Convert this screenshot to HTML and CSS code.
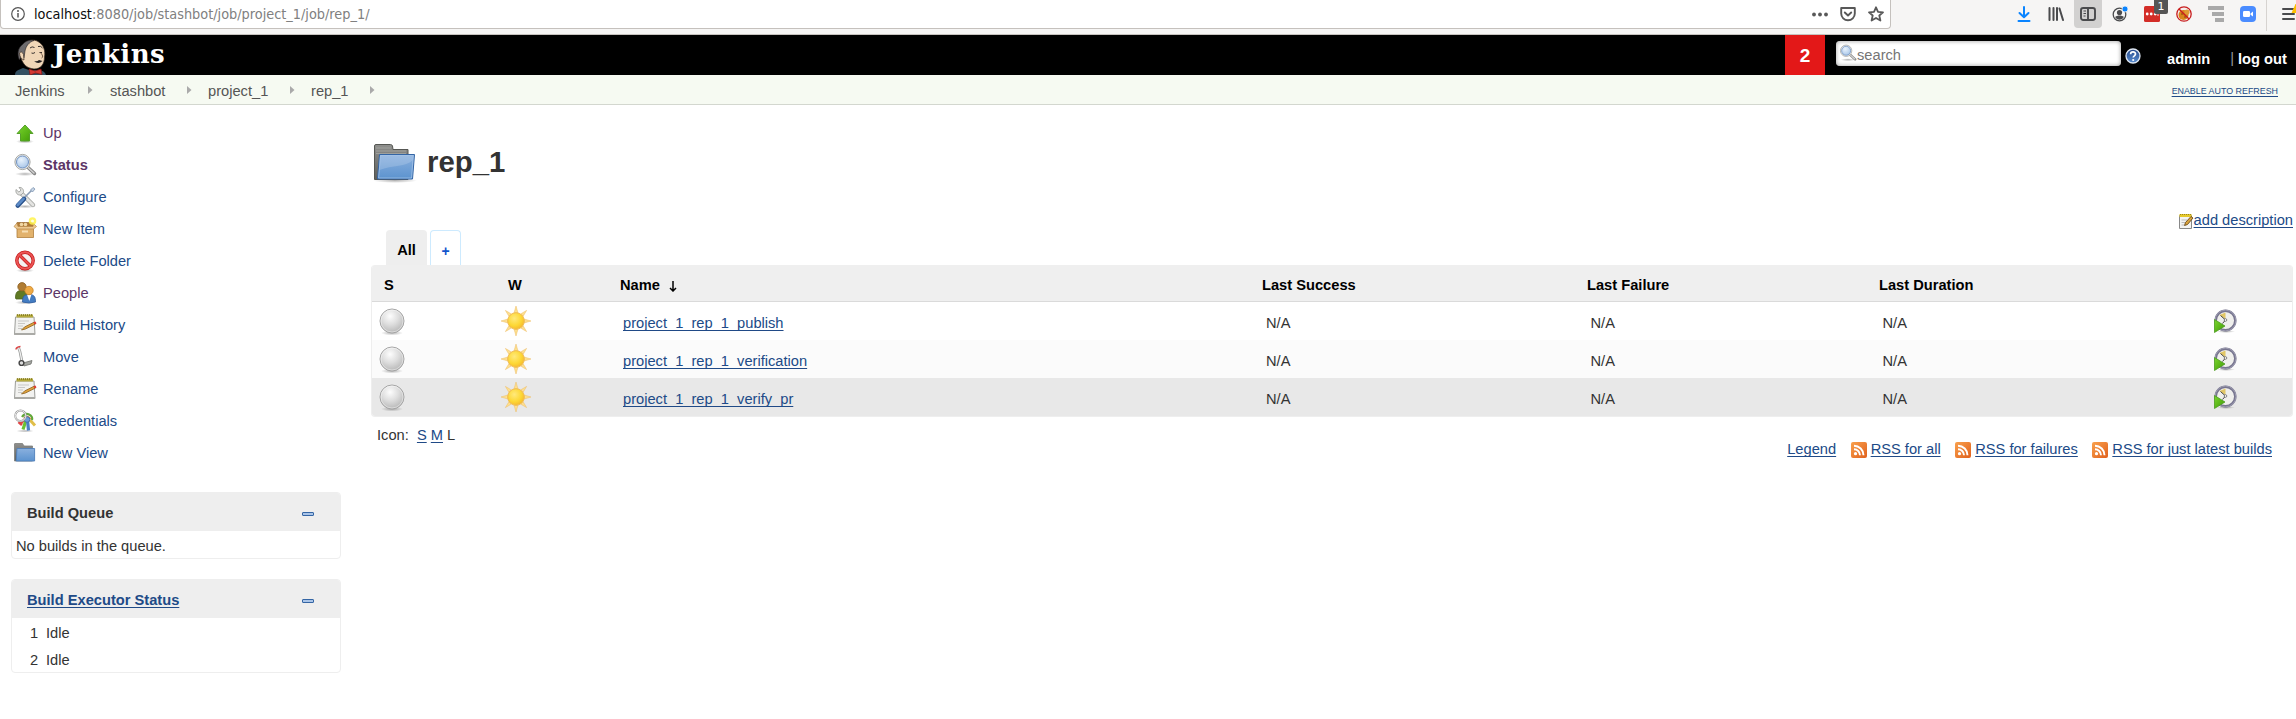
FILE: index.html
```html
<!DOCTYPE html>
<html lang="en">
<head>
<meta charset="utf-8">
<title>rep_1 [Jenkins]</title>
<link rel="stylesheet" href="styles.css">
</head>
<body>
<svg class="defs" width="0" height="0" aria-hidden="true">
  <defs>
    <linearGradient id="gGreen" x1="0" y1="0" x2="1" y2="1"><stop offset="0" stop-color="#7bd62e"/><stop offset="1" stop-color="#3f9a05"/></linearGradient>
    <linearGradient id="gFolder" x1="0" y1="0" x2="0" y2="1"><stop offset="0" stop-color="#8ab0de"/><stop offset="1" stop-color="#5c93cf"/></linearGradient>
    <linearGradient id="gBack" x1="0" y1="0" x2="0" y2="1"><stop offset="0" stop-color="#8f8f8d"/><stop offset="1" stop-color="#5c5e5b"/></linearGradient>
    <radialGradient id="gBall" cx=".42" cy=".3" r=".7"><stop offset="0" stop-color="#fdfdfd"/><stop offset=".5" stop-color="#dedede"/><stop offset="1" stop-color="#b8b8b8"/></radialGradient>
    <radialGradient id="gSun" cx=".4" cy=".35" r=".7"><stop offset="0" stop-color="#ffe97c"/><stop offset=".6" stop-color="#fdd835"/><stop offset="1" stop-color="#f5b62c"/></radialGradient>
    <radialGradient id="gLens" cx=".4" cy=".3" r=".8"><stop offset="0" stop-color="#e9f3fd"/><stop offset="1" stop-color="#a3c2e6"/></radialGradient>
    <radialGradient id="gShadow"><stop offset="0" stop-color="#000" stop-opacity=".3"/><stop offset="1" stop-color="#000" stop-opacity="0"/></radialGradient>
    <linearGradient id="gRss" x1="0" y1="0" x2="1" y2="1"><stop offset="0" stop-color="#f9a14d"/><stop offset="1" stop-color="#e0601c"/></linearGradient>
    <linearGradient id="gHelp" x1="0" y1="0" x2="0" y2="1"><stop offset="0" stop-color="#23478c"/><stop offset="1" stop-color="#5c8fd0"/></linearGradient>

    <symbol id="i-up" viewBox="0 0 24 24"><ellipse cx="12" cy="20.500" rx="9" ry="2" fill="url(#gShadow)"/><path d="M12 4 20 12.500H16.500V20H7.500V12.500H4Z" fill="url(#gGreen)" stroke="#55a02a" stroke-linejoin="round"/></symbol>
    <symbol id="i-status" viewBox="0 0 24 24"><ellipse cx="12" cy="21" rx="10" ry="2" fill="url(#gShadow)"/><path d="M15 14.500 21.500 20.500" stroke="#858585" stroke-width="3.400" stroke-linecap="round"/><path d="M15 14.500 21 20" stroke="#d2d2d2" stroke-width="1.500" stroke-linecap="round"/><circle cx="9.500" cy="9" r="7.600" fill="#eee" stroke="#a4a6a2"/><circle cx="9.500" cy="9" r="6" fill="url(#gLens)" stroke="#6f92c2"/></symbol>
    <symbol id="i-configure" viewBox="0 0 24 24"><ellipse cx="12" cy="21.500" rx="10" ry="1.800" fill="url(#gShadow)"/><path d="M8 8 20 20" stroke="#9c9e9a" stroke-width="4.400" stroke-linecap="round"/><path d="M8 8 20 20" stroke="#e4e4e2" stroke-width="2.900" stroke-linecap="round"/><path d="M3 4.500C2.300 8 4.500 10.500 8 10L10.500 7.500C11 4.500 9 2 6 2.500L8 5 6 7.200Z" fill="#e4e4e2" stroke="#979995" stroke-width=".8"/><path d="M12 12 19.500 4.500" stroke="#8a9cb5" stroke-width="1.600"/><path d="M17.500 5 20 2.500 22 4 19.500 7Z" fill="#c9d6e6" stroke="#7089a9" stroke-width=".7"/><path d="M4.800 20.500 11 14" stroke="#27508a" stroke-width="4.600" stroke-linecap="round"/><path d="M4.600 20 10.600 13.800" stroke="#5b8ac6" stroke-width="2.600" stroke-linecap="round"/></symbol>
    <symbol id="i-new" viewBox="0 0 24 24"><path d="M4 5.500H20L20.500 10H3.500Z" fill="#b07a35" stroke="#a0713a" stroke-width=".8"/><circle cx="8.500" cy="7.500" r="1.800" fill="#f0d7a5"/><circle cx="12.500" cy="7.500" r="1.800" fill="#f0d7a5"/><path d="M4 10.500H20.500V20.500H4Z" fill="#e2b26c" stroke="#b07f3d" stroke-width=".8"/><path d="M1 9.500 4 6 5 9.500H20L20.500 6.500 23.500 9.500 20.500 12H4Z" fill="#edc88f" stroke="#b98a4b" stroke-width=".7"/><path d="M9 13.500H15V15.500H9Z" fill="#f6dfb4"/><circle cx="19.500" cy="4" r="3.800" fill="#fff34a" opacity=".85"/><circle cx="19.500" cy="4" r="1.500" fill="#fffde0"/></symbol>
    <symbol id="i-delete" viewBox="0 0 24 24"><ellipse cx="12" cy="21.500" rx="9" ry="2" fill="url(#gShadow)"/><circle cx="12" cy="11.500" r="8.200" fill="#f4f1f1" stroke="#c41c1c" stroke-width="3.400"/><path d="M6.500 6 17.500 17" stroke="#c41c1c" stroke-width="3.200"/><circle cx="12" cy="11.500" r="8.200" fill="none" stroke="#ec5555" stroke-width="1.900"/><path d="M6.500 6 17.500 17" stroke="#e94949" stroke-width="1.900"/></symbol>
    <symbol id="i-people" viewBox="0 0 24 24"><ellipse cx="12" cy="21.500" rx="10" ry="2" fill="url(#gShadow)"/><path d="M2.500 17C2.500 11 4.500 9.500 9 9.500S15 12 15 18H3Z" fill="#607a24" stroke="#4d6420" stroke-width=".8"/><circle cx="9" cy="5.800" r="4.200" fill="#b07c33" stroke="#8c5f22" stroke-width=".8"/><path d="M9.500 21C9.500 15.500 11 13.500 16 13.500S22.500 15.500 22.500 21Q16 23 9.500 21Z" fill="#437cc2" stroke="#2f5c9c" stroke-width=".8"/><path d="M14 13.500H18.500L16.300 20Z" fill="#fff"/><circle cx="16" cy="9.500" r="4.200" fill="#eeaa45" stroke="#c98222" stroke-width=".8"/></symbol>
    <symbol id="i-note" viewBox="0 0 24 24"><path d="M2.500 4H21L22 21.500H1.500Z" fill="#f2f2f0" stroke="#9c9d99"/><path d="M1.500 20H22V22H1.500Z" fill="#aaaaa6"/><path d="M3.500 1.500H20V4.500H3.500Z" fill="#b5aa3c"/><path d="M4 2H20" stroke="#7f761c" stroke-width="1.300" stroke-dasharray="1 1"/><path d="M5 8H16M5 10.500H12M5 13H10M5 15.500H9" stroke="#c8c8c6"/><path d="M8.500 17 11.500 14 21.500 9 22.500 11 12.500 16Z" fill="#dfa23a" stroke="#8c6224" stroke-width=".8"/><path d="M20.500 9.300 22.500 8.500 23.500 10.500 21.500 11.500Z" fill="#df3c35"/></symbol>
    <symbol id="i-move" viewBox="0 0 24 24"><path d="M5.500 2.500C8.500 9 7.500 13 9.500 18" fill="none" stroke="#979997" stroke-width="2.800"/><path d="M5.500 2.500C8.500 9 7.500 13 9.500 18" fill="none" stroke="#f0f0f0" stroke-width="1.300"/><path d="M3 4.500Q3 2 7.500 1.500" fill="none" stroke="#d44" stroke-width="1.500"/><path d="M10 18 19 15.500 18 19 11 21Z" fill="#a6a8a3" stroke="#6d6f6b" stroke-width=".8"/><circle cx="8.500" cy="18" r="2.400" fill="#ddd" stroke="#444" stroke-width="1.400"/></symbol>
    <symbol id="i-keys" viewBox="0 0 24 24"><ellipse cx="12" cy="22" rx="9" ry="1.500" fill="url(#gShadow)"/><path d="M12 10 7 15.500M5.500 13 9 16" stroke="#e04444" stroke-width="2.600"/><path d="M13 11 10 20.500" stroke="#6cc133" stroke-width="3.200"/><path d="M17 11 22 16.500" stroke="#e0be48" stroke-width="3"/><path d="M14.500 11 15.500 21.500" stroke="#4a7fc4" stroke-width="3.200"/><path d="M9 8Q12 3.500 16 5.500T19 11" fill="none" stroke="#62a83a" stroke-width="2.200"/><path d="M11 9Q14 5.500 17.500 10" fill="none" stroke="#e07a30" stroke-width="1.600"/><circle cx="14" cy="10.500" r="2.800" fill="#6b9bd8" stroke="#4672ac"/><circle cx="7.500" cy="6.800" r="5.300" fill="none" stroke="#9a9a9a" stroke-width="2"/><circle cx="7.500" cy="6.800" r="5.300" fill="none" stroke="#f2f2f2" stroke-width=".9"/></symbol>
    <symbol id="i-folder" viewBox="0 0 24 24"><path d="M1.500 20V3Q1.500 2.500 2 2.500H9.500L11 5H19.500V20Z" fill="url(#gBack)" stroke="#7c7e7b" stroke-width=".8"/><path d="M4 7.500H21.600V20H3.200Z" fill="url(#gFolder)" stroke="#4f7fba" stroke-width=".9"/></symbol>
    <symbol id="i-folder-lg" viewBox="0 0 48 42"><ellipse cx="24" cy="38.500" rx="22" ry="2.500" fill="url(#gShadow)"/><path d="M3.500 37.500V4Q3.500 2.500 5 2.500H19.500Q21 2.500 21.500 4L22 7.500H37V37.500Z" fill="url(#gBack)" stroke="#555753"/><path d="M5 6H20M5 9H35M5 11.500H35" stroke="#a6a8a4" stroke-width=".8"/><path d="M8.500 12.500H43.500L41.500 37H6.500Z" fill="url(#gFolder)" stroke="#3465a4" stroke-linejoin="round"/><path d="M9.500 13.500H42.300L41.800 18C36 25 21 23 8.500 28Z" fill="#fff" opacity=".17"/><path d="M9.500 13.500H42.300L40.500 36H7.600Z" fill="none" stroke="#a8c6e9" stroke-width=".7"/></symbol>
    <symbol id="i-ball" viewBox="0 0 28 28"><ellipse cx="14" cy="25" rx="11" ry="2.500" fill="url(#gShadow)"/><circle cx="14" cy="13" r="12" fill="url(#gBall)" stroke="#a5a5a5"/><circle cx="14" cy="13" r="11" fill="none" stroke="#fff" stroke-opacity=".55" stroke-width=".8"/></symbol>
    <symbol id="i-sun" viewBox="0 0 32 32"><path fill="#fddf91" stroke="#eebd63" stroke-width=".5" d="M16 1 18 8H14ZM16 31 18 24H14ZM1 16 8 14V18ZM31 16 24 14V18ZM5.400 5.400 11.500 9 9 11.500ZM26.600 5.400 20.500 9 23 11.500ZM5.400 26.600 11.500 23 9 20.500ZM26.600 26.600 20.500 23 23 20.500Z"/><circle cx="16" cy="16" r="8.300" fill="url(#gSun)" stroke="#f0bb52"/></symbol>
    <symbol id="i-clock" viewBox="0 0 24 24"><ellipse cx="13" cy="22.500" rx="9" ry="1.500" fill="url(#gShadow)"/><circle cx="12.500" cy="11.500" r="9.800" fill="#efefec" stroke="#77758f" stroke-width="2.500"/><circle cx="12.500" cy="11.500" r="10.400" fill="none" stroke="#a5a4b8" stroke-width=".8"/><path d="M6.500 6 12.500 3.500V10Z" fill="#e2c766"/><path d="M7.500 6.500 12.500 11 9.500 14.500" fill="none" stroke="#444" stroke-width="1"/><circle cx="12.500" cy="11" r="1.300" fill="#fff" stroke="#555" stroke-width=".7"/><path d="M1.500 10.500V23.500L12 17Z" fill="url(#gGreen)" stroke="#4a9a20" stroke-width=".8"/></symbol>
    <symbol id="i-rss" viewBox="0 0 16 16"><rect width="16" height="16" rx="2" fill="url(#gRss)"/><circle cx="4.500" cy="11.700" r="1.600" fill="#fff"/><path d="M3 7.200A6 6 0 0 1 9 13.200M3 3.700A9.500 9.500 0 0 1 12.500 13.200" fill="none" stroke="#fff" stroke-width="1.900"/></symbol>
    <symbol id="i-sep" viewBox="0 0 5 8"><path d="M0 0 4.500 4 0 8Z" fill="#aaa"/></symbol>
  </defs>
</svg>

<div class="browser">
  <div class="urlbar">
    <svg class="info" width="14" height="14" viewBox="0 0 14 14"><circle cx="7" cy="7" r="6.300" fill="none" stroke="#555" stroke-width="1.200"/><path d="M7 6V10.500" stroke="#555" stroke-width="1.500"/><circle cx="7" cy="3.900" r="1" fill="#555"/></svg>
    <span class="url"><b>localhost</b>:8080/job/stashbot/job/project_1/job/rep_1/</span>
    <span class="url-icons">
      <svg width="16" height="16" viewBox="0 0 16 16" fill="#585858"><circle cx="2" cy="8.500" r="1.900"/><circle cx="8" cy="8.500" r="1.900"/><circle cx="14" cy="8.500" r="1.900"/></svg>
      <svg width="16" height="16" viewBox="0 0 16 16" fill="none" stroke="#585858" stroke-width="1.900" stroke-linecap="round" stroke-linejoin="round"><path d="M1.200 2H14.800V7.500A6.800 6.800 0 0 1 1.200 7.500ZM4.800 6.500 8 9.500 11.200 6.500"/></svg>
      <svg width="16" height="16" viewBox="0 0 16 16" fill="none" stroke="#585858" stroke-width="1.800" stroke-linejoin="round"><path d="M8 1.300 10 5.800 15 6.300 11.300 9.500 12.400 14.500 8 11.900 3.600 14.500 4.700 9.500 1 6.300 6 5.800Z"/></svg>
    </span>
  </div>
  <div class="tools">
    <span class="tool"><svg width="16" height="16" viewBox="0 0 16 16" fill="none" stroke="#0a84ff" stroke-width="2" stroke-linecap="round" stroke-linejoin="round"><path d="M8 1V11M3.500 7 8 11.300 12.500 7M2.500 15H13.500"/></svg></span>
    <span class="tool"><svg width="16" height="16" viewBox="0 0 16 16" fill="none" stroke="#4a4b4d" stroke-width="2" stroke-linecap="round"><path d="M1.500 2V14M5.500 2V14M9 2V14M11.500 2.500 15 14"/></svg></span>
    <span class="tool pressed"><svg width="16" height="16" viewBox="0 0 16 16" fill="none" stroke="#4a4b4d" stroke-width="1.900"><rect x="1" y="2" width="14" height="12" rx="2.200"/><path d="M8 2V14"/><path d="M3.500 5H6M3.500 7.500H6M3.500 10H5.500" stroke-width="1"/></svg></span>
    <span class="tool"><svg width="16" height="16" viewBox="0 0 16 16"><circle cx="7.500" cy="8.500" r="6.300" fill="none" stroke="#4a4b4d" stroke-width="1.300"/><circle cx="7.500" cy="6.500" r="2.600" fill="#4a4b4d"/><path d="M3.200 11C5 9 10 9 11.800 11 10 14.500 5 14.500 3.200 11Z" fill="#4a4b4d"/><circle cx="13" cy="3" r="3" fill="#0a84ff" stroke="#f6f5f4" stroke-width=".8"/></svg></span>
    <span class="tool"><svg width="16" height="16" viewBox="0 0 16 16"><rect width="16" height="16" rx="1.500" fill="#d32d27"/><g fill="#fff"><circle cx="3.200" cy="8" r="1.400"/><circle cx="7.200" cy="8" r="1.400"/><circle cx="11.200" cy="8" r="1.400"/></g><path d="M14 6V10" stroke="#fff" stroke-width=".8"/></svg><span class="badge">1</span></span>
    <span class="tool"><svg width="16" height="16" viewBox="0 0 16 16"><circle cx="8" cy="8" r="7.200" fill="#f6eeee"/><circle cx="7.500" cy="9" r="5" fill="#d8851c"/><circle cx="11" cy="6" r="2.600" fill="#e09b35"/><circle cx="6" cy="8" r=".8" fill="#7a4208"/><circle cx="9" cy="11" r=".8" fill="#7a4208"/><circle cx="8" cy="8" r="7.200" fill="none" stroke="#c81e1e" stroke-width="1.300"/><path d="M3 3 13 13" stroke="#c81e1e" stroke-width="1.400"/></svg></span>
    <span class="tool"><svg width="16" height="16" viewBox="0 0 16 16" fill="#a9a9a9"><path d="M0 0H16V4H0ZM4 6H16V10H4ZM7 12H16V16H7Z"/></svg></span>
    <span class="tool"><svg width="16" height="16" viewBox="0 0 16 16"><rect width="16" height="16" rx="4" fill="#4a8cff"/><rect x="3" y="5" width="7" height="6" rx="1.200" fill="#fff"/><path d="M10.500 7.500 13 5.500V10.500L10.500 8.700Z" fill="#fff"/></svg></span>
    <span class="menu"><svg width="16" height="18" viewBox="0 0 16 18"><path d="M1 5H12M1 10H12M1 15H12" stroke="#4a4b4d" stroke-width="2" stroke-linecap="round"/><path d="M9.500 9 13.500 0H18V9Z" fill="#ffbf00"/></svg></span>
  </div>
</div>

<header class="header">
  <div class="brand">
    <svg width="32" height="36" viewBox="0 0 32 36"><path d="M0 36C0 32 3 31 8 29L14 31 24 31Q30 32 31 36Z" fill="#335061"/><path d="M8 7C11 1 18-.5 23 2.500 29 6 30.500 12 29.500 18 29.500 25 26 30 19 30 11 29 8 25 6 19Z" fill="#f0d6b7" stroke="#3b2d22" stroke-width=".7"/><path d="M4.500 21C2 16 2.500 9 7.500 5.500 10 2 15 .5 19 1.500 14 3 11 7 10 12L9 19 6.500 17Z" fill="#6d6b6d" stroke="#231f20" stroke-width=".6"/><path d="M4.500 14Q7 11.500 8.500 15.500L9 21Q5 20 4.500 14Z" fill="#f0d6b7" stroke="#3b2d22" stroke-width=".7"/><path d="M15 9Q17 7 19.500 8.500M23 7.500Q26 6.500 27.500 9M16.500 14Q18 15 20 13.500M24.500 13.500H27" fill="none" stroke="#231f20" stroke-width=".9"/><path d="M25 13Q29.500 18 26.500 19" fill="none" stroke="#5c4433" stroke-width=".8"/><path d="M19 22Q22 23 24 21L27.500 22Q23 26 19 22Z" fill="#231f20"/><path d="M14 30 20 32 26 30 27 35.500 20.500 34 15 36Z" fill="#d33833" stroke="#7f1713" stroke-width=".7"/></svg>
    <span class="brand-name">Jenkins</span>
  </div>
  <div class="alert">2</div>
  <div class="search"><svg width="18" height="18" viewBox="0 0 24 24"><use href="#i-status"/></svg><span>search</span></div>
  <div class="help"><svg width="16" height="16" viewBox="0 0 16 16"><circle cx="8" cy="8" r="7" fill="url(#gHelp)" stroke="#dfe7f3" stroke-width="1.300"/><path d="M5.600 6.200C5.600 3.200 10.500 3.300 10.500 6 10.500 7.800 8.200 7.800 8.200 9.600" fill="none" stroke="#fff" stroke-width="1.700"/><circle cx="8.200" cy="12" r="1.100" fill="#fff"/></svg></div>
  <div class="login"><b>admin</b><span class="bar">|</span><b>log out</b></div>
</header>

<nav class="crumbs">
  <span class="c1">Jenkins</span><svg width="5" height="8"><use href="#i-sep"/></svg>
  <span class="c2">stashbot</span><svg width="5" height="8"><use href="#i-sep"/></svg>
  <span class="c3">project_1</span><svg width="5" height="8"><use href="#i-sep"/></svg>
  <span class="c4">rep_1</span><svg width="5" height="8"><use href="#i-sep"/></svg>
  <a class="refresh">ENABLE AUTO REFRESH</a>
</nav>

<div class="page">
  <aside class="side">
    <ul class="tasks">
      <li class="visited"><svg><use href="#i-up"/></svg>Up</li>
      <li class="visited current"><svg><use href="#i-status"/></svg>Status</li>
      <li><svg><use href="#i-configure"/></svg>Configure</li>
      <li><svg><use href="#i-new"/></svg>New Item</li>
      <li><svg><use href="#i-delete"/></svg>Delete Folder</li>
      <li class="visited"><svg><use href="#i-people"/></svg>People</li>
      <li><svg><use href="#i-note"/></svg>Build History</li>
      <li><svg><use href="#i-move"/></svg>Move</li>
      <li><svg><use href="#i-note"/></svg>Rename</li>
      <li><svg><use href="#i-keys"/></svg>Credentials</li>
      <li><svg><use href="#i-folder"/></svg>New View</li>
    </ul>
    <section class="pane">
      <h2>Build Queue<i class="collapse"></i></h2>
      <p class="empty">No builds in the queue.</p>
    </section>
    <section class="pane">
      <h2><a>Build Executor Status</a><i class="collapse"></i></h2>
      <p class="exec"><span>1</span>Idle</p>
      <p class="exec"><span>2</span>Idle</p>
    </section>
  </aside>

  <main class="main">
    <h1><svg width="48" height="42"><use href="#i-folder-lg"/></svg>rep_1</h1>
    <div class="describe"><svg width="15" height="16" viewBox="0 0 15 16"><path d="M.5 2.500H12.500V15.500H.5Z" fill="#f4f4f2" stroke="#888"/><path d="M.5 1H12.500V4H.5Z" fill="#e6c92c"/><path d="M1 1.500H13" stroke="#9c861a" stroke-dasharray="1 1"/><path d="M2.500 7H8M2.500 9.500H6M2.500 12H5" stroke="#bbb"/><path d="M5.500 12.500 6.500 9.500 12 3.500 14 5 8.500 11.500Z" fill="#d8a23c" stroke="#6a4a18" stroke-width=".9"/></svg><a>add description</a></div>
    <div class="tabs"><span class="tab on">All</span><span class="tab add">+</span></div>
    <div class="jobs">
      <div class="row head"><span>S</span><span>W</span><span>Name &nbsp;<svg class="sort" width="8" height="11" viewBox="0 0 8 11"><path d="M4 0V10M1 7 4 10 7 7" fill="none" stroke="#000" stroke-width="1.500"/></svg></span><span>Last Success</span><span>Last Failure</span><span>Last Duration</span><span></span></div>
      <div class="row"><svg class="ball"><use href="#i-ball"/></svg><svg class="sun"><use href="#i-sun"/></svg><a>project_1_rep_1_publish</a><span>N/A</span><span>N/A</span><span>N/A</span><svg class="clock"><use href="#i-clock"/></svg></div>
      <div class="row even"><svg class="ball"><use href="#i-ball"/></svg><svg class="sun"><use href="#i-sun"/></svg><a>project_1_rep_1_verification</a><span>N/A</span><span>N/A</span><span>N/A</span><svg class="clock"><use href="#i-clock"/></svg></div>
      <div class="row hover"><svg class="ball"><use href="#i-ball"/></svg><svg class="sun"><use href="#i-sun"/></svg><a>project_1_rep_1_verify_pr</a><span>N/A</span><span>N/A</span><span>N/A</span><svg class="clock"><use href="#i-clock"/></svg></div>
    </div>
    <div class="foot">
      <div class="sizes">Icon: &nbsp;<a>S</a> <a>M</a> L</div>
      <div class="feeds"><a>Legend</a><svg><use href="#i-rss"/></svg><a>RSS for all</a><svg><use href="#i-rss"/></svg><a>RSS for failures</a><svg><use href="#i-rss"/></svg><a>RSS for just latest builds</a></div>
    </div>
  </main>
</div>
</body>
</html>
```
FILE: styles.css
```css
* { box-sizing: border-box; }
body { margin: 0; height: 719px; overflow: hidden; background: #fff; color: #333; font: 14.67px/20px "Liberation Sans", Arial, sans-serif; }
.defs { position: absolute; }
svg { display: block; flex: none; }
a { color: #204a87; text-decoration: underline; text-decoration-skip-ink: none; text-decoration-thickness: 1px; text-underline-offset: 2px; }

.browser { display: flex; height: 35px; background: #f6f5f4; border-bottom: 1px solid #c6c2be; }
.urlbar { display: flex; flex: none; align-items: center; width: 1891px; height: 29px; padding: 0 6px 0 10px; background: #fff; border: 1px solid #c5c1bd; border-top: 0; border-radius: 0 0 4px 4px; }
.url { margin-left: 9px; font: 14.35px/28px "DejaVu Sans Condensed", "DejaVu Sans", sans-serif; font-stretch: condensed; color: #808080; white-space: nowrap; }
.url b { font-weight: normal; color: #0c0c0d; }
.url-icons { display: flex; gap: 12px; margin-left: auto; }
.tools { display: flex; flex: 1; min-width: 0; padding-left: 119px; gap: 4px; overflow: hidden; }
.tool { display: flex; flex: none; align-items: center; justify-content: center; position: relative; width: 28px; height: 28px; }
.pressed { background: #d2d1d0; border-radius: 0 0 4px 4px; }
.badge { position: absolute; left: 16px; top: 0; width: 14px; height: 14px; background: #555; border-radius: 0 0 2px 2px; color: #fff; font: 11px/13px "DejaVu Sans", sans-serif; text-align: center; }
.menu { flex: none; width: 40px; height: 31px; padding: 4px 0 0 15px; border-left: 1px solid #d6d3d0; }

.header { display: flex; height: 40px; background: #000; color: #fff; }
.brand { display: flex; width: 1785px; padding: 4px 0 0 15px; }
.brand-name { margin: -3px 0 0 6px; font: bold 26px/36px "DejaVu Serif", serif; letter-spacing: .4px; }
.alert { width: 40px; background: #e31818; font-size: 19px; font-weight: bold; line-height: 41px; text-align: center; }
.search { display: flex; align-items: center; width: 285px; height: 25px; margin: 6px 0 0 11px; padding-left: 3px; background: #fff; border-radius: 4px; box-shadow: inset 0 0 4px #999; color: #757575; }
.search svg { margin-top: -1px; }
.search span { margin: 3px 0 0 0; }
.help { margin: 13px 0 0 4px; }
.login { display: flex; margin: 14px 0 0 26px; }
.login .bar { margin: -1px 4px 0 20px; color: #999; }

.crumbs { display: flex; align-items: center; height: 30px; padding: 0 18px 0 15px; background: #f6faf2; border-bottom: 1px solid #d3d7cf; color: #555; }
.crumbs span { padding-top: 3px; white-space: nowrap; }
.crumbs svg { margin-top: 1px; }
.c1 { width: 73px; }
.c2 { width: 77px; margin-left: 17px; }
.c3 { width: 82px; margin-left: 16px; }
.c4 { width: 59px; margin-left: 16px; }
.refresh { margin-left: auto; padding-top: 2px; font-size: 8.9px; white-space: nowrap; }

.page { display: flex; }
.side { width: 341px; padding: 12px 0 0 11px; }
.tasks { margin: 0 0 23px; padding: 0; list-style: none; }
.tasks li { display: flex; align-items: center; height: 32px; padding-left: 2px; color: #204a87; }
.tasks svg { width: 24px; height: 24px; margin-right: 6px; }
.tasks .visited { color: #5c3566; }
.tasks .current { font-weight: bold; }
.pane { margin-bottom: 20px; border: 1px solid #eee; border-radius: 4px; overflow: hidden; }
.pane h2 { display: flex; align-items: center; justify-content: space-between; height: 38px; margin: 0; padding: 1px 26px 0 15px; background: #eee; font-size: 14.67px; }
.collapse { width: 12px; height: 4px; margin-top: 3px; border: 1px solid #3465a4; background: #a9c4e8; border-radius: 1px; }
.pane p { margin: 0; height: 27px; line-height: 30px; }
.pane .empty { padding-left: 4px; line-height: 30px; }
.exec { padding-left: 18px; }
.exec span { display: inline-block; width: 16px; }

.main { flex: 1; padding: 37px 3px 0 30px; }
h1 { display: flex; align-items: center; height: 42px; margin: 0; font-size: 29.34px; line-height: 40px; padding-bottom: 2px; }
h1 svg { margin: 2px 8px 0 0; }
.describe { display: flex; justify-content: flex-end; align-items: center; height: 20px; margin-top: 26px; }
.describe svg { margin-top: 2px; }
.tabs { display: flex; gap: 3px; height: 35px; padding-left: 15px; }
.tab { border-radius: 4px 4px 0 0; font-weight: bold; }
.on { width: 41px; background: #eee; color: #000; line-height: 40px; text-align: center; }
.add { width: 31px; border: 1px solid #cdeafe; border-bottom: 0; color: #1155cc; font-size: 14px; line-height: 40px; text-align: center; }
.jobs { border: 1px solid #eee; border-top: 0; border-radius: 4px; overflow: hidden; }
.row { display: grid; grid-template-columns: 120px 123px 643px 324.500px 292px 1fr 78px; align-items: center; height: 38px; padding-left: 8px; }
.row > span, .row > a { justify-self: start; }
.row:not(.head) > span, .row:not(.head) > a { margin: 3px 0 0; }
.head { height: 37px; padding-left: 12px; grid-template-columns: 124px 112px 642px 325px 292px 1fr 78px; background: #efefef; border-bottom: 1px solid #dadada; color: #000; font-weight: bold; }
.head span { padding-top: 3px; }
.sort { display: inline-block; margin-left: 1px; vertical-align: -2px; }
.even { background: #fbfbfb; }
.hover { background: #e8e8e8; }
.ball { width: 28px; height: 28px; margin: 1px 0 0 -2px; }
.sun { width: 32px; height: 32px; }
.clock { width: 24px; height: 24px; margin-left: -1px; }
.foot { display: flex; justify-content: space-between; padding: 8px 21px 0 6px; }
.feeds { display: flex; align-items: center; margin-top: 14px; }
.feeds svg { width: 16px; height: 16px; margin: 2px 4px 0 14.500px; }
```
